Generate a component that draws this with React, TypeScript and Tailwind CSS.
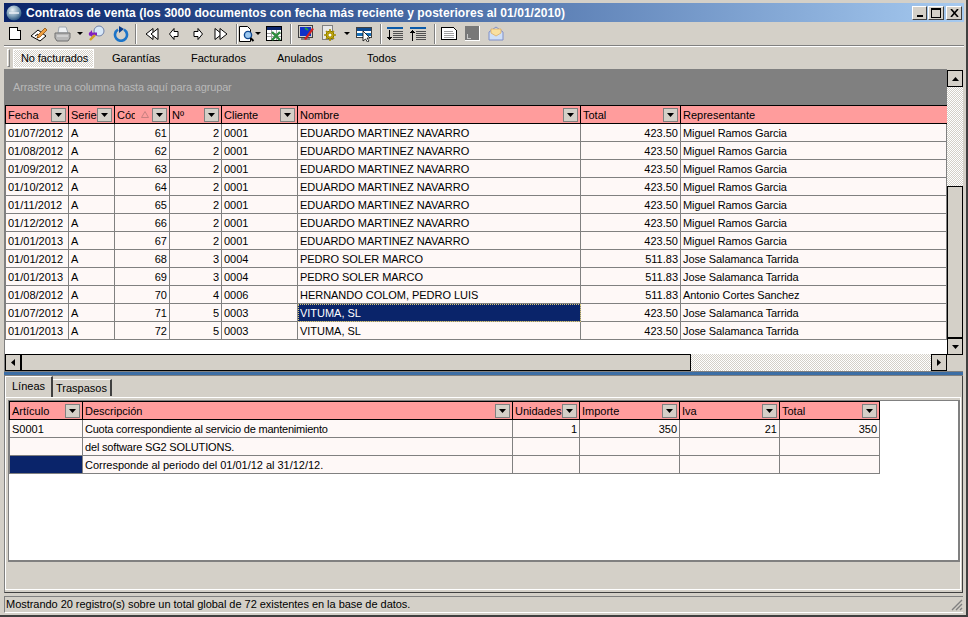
import React from "react";

const upperCols = [63, 46, 55, 52, 76, 283, 100, 266];
const upperHead = ["Fecha", "Serie", "Cód", "Nº", "Cliente", "Nombre", "Total", "Representante"];
const upperRows: string[][] = [
  ["01/07/2012", "A", "61", "2", "0001", "EDUARDO MARTINEZ NAVARRO", "423.50", "Miguel Ramos Garcia"],
  ["01/08/2012", "A", "62", "2", "0001", "EDUARDO MARTINEZ NAVARRO", "423.50", "Miguel Ramos Garcia"],
  ["01/09/2012", "A", "63", "2", "0001", "EDUARDO MARTINEZ NAVARRO", "423.50", "Miguel Ramos Garcia"],
  ["01/10/2012", "A", "64", "2", "0001", "EDUARDO MARTINEZ NAVARRO", "423.50", "Miguel Ramos Garcia"],
  ["01/11/2012", "A", "65", "2", "0001", "EDUARDO MARTINEZ NAVARRO", "423.50", "Miguel Ramos Garcia"],
  ["01/12/2012", "A", "66", "2", "0001", "EDUARDO MARTINEZ NAVARRO", "423.50", "Miguel Ramos Garcia"],
  ["01/01/2013", "A", "67", "2", "0001", "EDUARDO MARTINEZ NAVARRO", "423.50", "Miguel Ramos Garcia"],
  ["01/01/2012", "A", "68", "3", "0004", "PEDRO SOLER MARCO", "511.83", "Jose Salamanca Tarrida"],
  ["01/01/2013", "A", "69", "3", "0004", "PEDRO SOLER MARCO", "511.83", "Jose Salamanca Tarrida"],
  ["01/08/2012", "A", "70", "4", "0006", "HERNANDO COLOM, PEDRO LUIS", "511.83", "Antonio Cortes Sanchez"],
  ["01/07/2012", "A", "71", "5", "0003", "VITUMA, SL", "423.50", "Jose Salamanca Tarrida"],
  ["01/01/2013", "A", "72", "5", "0003", "VITUMA, SL", "423.50", "Jose Salamanca Tarrida"],
];
const upperRight = [false, false, true, true, false, false, true, false];
const upperTrack = ["", "", "", "", "", "tracking-[-0.03px]", "", "tracking-[-0.1px]"];

const lowerCols = [73, 430, 67, 100, 100, 100];
const lowerHead = ["Artículo", "Descripción", "Unidades", "Importe", "Iva", "Total"];
const lowerRows: string[][] = [
  ["S0001", "Cuota correspondiente al servicio de mantenimiento", "1", "350", "21", "350"],
  ["", "del software SG2 SOLUTIONS.", "", "", "", ""],
  ["", "Corresponde al periodo del 01/01/12 al 31/12/12.", "", "", "", ""],
];
const lowerRight = [false, false, true, true, true, true];
const lowerTrack = ["tracking-[-0.22px]", "tracking-[-0.18px]", "tracking-[-0.02px]"];

function HeadBtn() {
  return (
    <span className="mr-[2px] flex h-[14px] w-[15px] shrink-0 items-center justify-center border border-[#808080] bg-[#d4d0c8]">
      <svg width="7" height="4" viewBox="0 0 7 4"><path d="M0 0h7L3.5 4z" fill="#000" /></svg>
    </span>
  );
}

function HeadCell({ w, label, sorted }: { w: number; label: string; sorted?: boolean }) {
  return (
    <div style={{ width: w }} className="flex h-[17px] shrink-0 items-center border-r border-black bg-[#ff9c9c]">
      <span className="min-w-0 flex-1 overflow-hidden whitespace-nowrap pl-[2px] pt-[1px] leading-[14px] text-black">{label}</span>
      {sorted && (
        <svg className="ml-[6px] mr-[3px] shrink-0" width="8" height="7" viewBox="0 0 8 7">
          <path d="M4 .5L7.5 6.5H.5z" fill="none" stroke="#c88080" />
        </svg>
      )}
      <HeadBtn />
    </div>
  );
}

function Cell({ w, text, right, selected, blue, track }: { w: number; text: string; right?: boolean; selected?: boolean; blue?: boolean; track?: string }) {
  return (
    <div style={{ width: w }} className={`flex h-[18px] shrink-0 items-center overflow-hidden whitespace-nowrap border-r border-b border-[#808080] pt-[1px] ${track ?? ""} ${right ? "justify-end pr-[2px]" : "pl-[2px]"} ${selected ? "bg-[#0a246a] text-white outline-1 -outline-offset-1 outline-dotted outline-[#d8c878]" : blue ? "bg-[#0a246a]" : "bg-[#fef8f7] text-black"}`}>
      {text}
    </div>
  );
}

function ScrollBtn({ dir }: { dir: "up" | "down" | "left" | "right" }) {
  const d = { up: "M0 4L3.5 0 7 4z", down: "M0 0h7L3.5 4z", left: "M4 0v7L0 3.5z", right: "M0 0v7L4 3.5z" }[dir];
  const vb = dir === "up" || dir === "down" ? [7, 4] : [4, 7];
  return (
    <div className="flex h-[17px] w-[16px] shrink-0 items-center justify-center border border-black bg-[#d4d0c8]">
      <svg width={vb[0]} height={vb[1]} viewBox={`0 0 ${vb[0]} ${vb[1]}`}><path d={d} fill="#000" /></svg>
    </div>
  );
}

function Sep() {
  return <div className="h-[20px] w-[2px] shrink-0 border-l border-r border-l-[#808080] border-r-white" />;
}

function Drop({ className }: { className: string }) {
  return <svg className={`shrink-0 ${className}`} width="6" height="3" viewBox="0 0 6 3"><path d="M0 0h6L3 3z" fill="#000" /></svg>;
}

function Ico({ w = 16, h = 16, className, children }: { w?: number; h?: number; className: string; children: React.ReactNode }) {
  return <svg className={`shrink-0 ${className}`} width={w} height={h} viewBox={`0 0 ${w} ${h}`} shapeRendering="crispEdges">{children}</svg>;
}

export default function App() {
  return (
    <div className="flex h-[617px] w-[968px] flex-col overflow-hidden border-r-2 border-b-2 border-[#404040] bg-[#d4d0c8] pt-[3px] pl-[4px] pr-[2px] text-[11px] leading-none font-['Liberation_Sans',sans-serif] text-black">
      {/* title bar */}
      <div className="flex h-[19px] shrink-0 items-center bg-gradient-to-r from-[#0a246a] to-[#a6caf0] pr-[2px]">
        <svg className="ml-[2px] mr-[4px] shrink-0" width="16" height="16" viewBox="0 0 16 16">
          <defs>
            <radialGradient id="globe" cx="40%" cy="30%" r="75%">
              <stop offset="0" stopColor="#e8f0f4" />
              <stop offset="0.55" stopColor="#7fa0b8" />
              <stop offset="1" stopColor="#1e4a78" />
            </radialGradient>
          </defs>
          <circle cx="8" cy="8" r="7.5" fill="url(#globe)" />
          <path d="M3 8h10" stroke="#e8eef4" strokeWidth="1.5" />
        </svg>
        <span className="flex-1 whitespace-nowrap text-[12px] font-bold tracking-[0.06px] text-white">Contratos de venta (los 3000 documentos con fecha más reciente y posteriores al 01/01/2010)</span>
        <div className="flex h-[14px] w-[15px] items-end justify-center border border-b-[#404040] border-r-[#404040] border-t-white border-l-white bg-[#d4d0c8] pb-[2px]"><div className="h-[2px] w-[6px] bg-black" /></div>
        <div className="ml-[1px] flex h-[14px] w-[16px] items-center justify-center border border-b-[#404040] border-r-[#404040] border-t-white border-l-white bg-[#d4d0c8]"><div className="h-[10px] w-[10px] border border-t-2 border-black" /></div>
        <div className="ml-[2px] flex h-[14px] w-[16px] items-center justify-center border border-b-[#404040] border-r-[#404040] border-t-white border-l-white bg-[#d4d0c8]">
          <svg width="9" height="8" viewBox="0 0 9 8"><path d="M1 0l7 8M8 0L1 8" stroke="#000" strokeWidth="1.6" /></svg>
        </div>
      </div>

      {/* toolbar */}
      <div className="flex h-[23px] shrink-0 items-center">
        <Ico className="ml-[4px]" w={14} h={15}><path d="M1.5 1.5h8l3 3v9h-11z" fill="#fff" stroke="#000" /><path d="M9.5 1.5v3h3" fill="#d4d0c8" stroke="#000" /></Ico>
        <Ico className="ml-[8px]" w={18} h={16}><g shapeRendering="auto"><path d="M1 10L8 4l8 6-6 5z" fill="#fff" stroke="#000" /><path d="M5 10l3-2M7 12l3-2" stroke="#000" /><path d="M8 9l7-7 2 2-7 7-3 1z" fill="#f0a040" stroke="#804000" strokeWidth=".7" /></g></Ico>
        <Ico className="ml-[6px]" w={17} h={16}><g shapeRendering="auto"><path d="M5 1h7l2 6H4z" fill="#eef0f2" stroke="#a0a8b0" /><path d="M1 7h15v5l-2 3H3l-2-3z" fill="#b8b8b8" stroke="#707070" /><path d="M3 10h11" stroke="#e8e8e8" /></g></Ico>
        <Drop className="ml-[6px]" />
        <Ico className="ml-[5px]" w={17} h={17}><g shapeRendering="auto"><circle cx="11" cy="6" r="5" fill="#d8e8f8" stroke="#7080a8" /><path d="M1 9h8" stroke="#8020c0" strokeWidth="3" /><path d="M4 5L.5 9 4 12z" fill="#8020c0" /><path d="M7 10l-5 5" stroke="#d0a020" strokeWidth="2.4" /></g></Ico>
        <Ico className="ml-[8px]" w={16} h={16}><g shapeRendering="auto"><path d="M5 3.6A6 6 0 1 0 11 3.6" fill="none" stroke="#1c74c8" strokeWidth="2.6" /><path d="M6 0l5 3-5 4z" fill="#0c3e8c" /></g></Ico>
        <div className="ml-[6px]"><Sep /></div>
        <Ico className="ml-[8px]" w={14} h={16}><g shapeRendering="auto"><path d="M8 2.5v11L1 8z" fill="#fff" stroke="#000" /><path d="M13 2.5v11L6 8z" fill="#fff" stroke="#000" /></g></Ico>
        <Ico className="ml-[10px]" w={10} h={16}><g shapeRendering="auto"><path d="M5 2.5v3h4v5H5v3L.5 8z" fill="#fff" stroke="#000" /></g></Ico>
        <Ico className="ml-[14px]" w={10} h={16}><g shapeRendering="auto"><path d="M5 2.5v3H1v5h4v3L9.5 8z" fill="#fff" stroke="#000" /></g></Ico>
        <Ico className="ml-[11px]" w={14} h={16}><g shapeRendering="auto"><path d="M1 2.5v11L8 8z" fill="#fff" stroke="#000" /><path d="M6 2.5v11L13 8z" fill="#fff" stroke="#000" /></g></Ico>
        <div className="ml-[8px]"><Sep /></div>
        <Ico w={17} h={18} className="ml-0"><g shapeRendering="auto"><path d="M1.5 1.5h8l3 3v12h-11z" fill="#fff" stroke="#000" /><circle cx="10" cy="10" r="3.6" fill="#9cc8f0" stroke="#104890" strokeWidth="1.4" /><path d="M12.5 13l3 3" stroke="#000" strokeWidth="2" /></g></Ico>
        <Drop className="ml-0" />
        <Ico className="ml-[5px]" w={17} h={16}><rect x=".5" y=".5" width="15" height="14" fill="#fff" stroke="#000" /><rect x="1" y="1" width="14" height="3" fill="#0a246a" /><path d="M1 7h14M1 10h14M5 4v10M10 4v10" stroke="#a0a0a0" /><g shapeRendering="auto"><path d="M6 6l8 8M14 6l-8 8" stroke="#2c8c3c" strokeWidth="2.4" /></g></Ico>
        <div className="ml-[7px]"><Sep /></div>
        <Ico className="ml-[6px]" w={17} h={17}><rect x=".5" y=".5" width="14" height="12" fill="#d4d0c8" stroke="#404040" /><rect x="2" y="2" width="11" height="9" fill="#1030c8" /><rect x="3" y="13" width="9" height="2" fill="#808080" /><g shapeRendering="auto"><path d="M6 14L14 3l2 1-8 11z" fill="#d02020" /><path d="M7 3l3 2" stroke="#20a040" strokeWidth="2" /></g></Ico>
        <Ico className="ml-[6px]" w={17} h={17}><rect x="1.5" y=".5" width="10" height="14" fill="#e8e8e8" stroke="#808080" /><g shapeRendering="auto"><circle cx="9" cy="10" r="4" fill="#e8d020" stroke="#807000" /><path d="M9 4v12M3 10h12M5 6l8 8M13 6l-8 8" stroke="#a89000" strokeWidth="1.6" /><circle cx="9" cy="10" r="1.5" fill="#fff" /></g></Ico>
        <Drop className="ml-[6px]" />
        <Ico className="ml-[6px]" w={16} h={16}><rect x=".5" y="1.5" width="15" height="10" fill="#fff" stroke="#404040" /><rect x="1" y="2" width="14" height="3" fill="#0c4a90" /><rect x="1" y="7" width="14" height="3" fill="#1870b8" /><g shapeRendering="auto"><path d="M7 5v10l2.5-2 2 3 1.5-1-2-3h3z" fill="#fff" stroke="#000" strokeWidth=".8" /></g></Ico>
        <div className="ml-[8px]"><Sep /></div>
        <Ico className="ml-[5px]" w={16} h={16}><rect x="0" y="1" width="16" height="2" fill="#0a5aa8" /><path d="M6 5h10M6 7h10M6 9h10M6 11h10M6 13h10" stroke="#505050" /><path d="M2.5 4v9" stroke="#000" strokeWidth="1" /><path d="M0 11h5l-2.5 3z" fill="#000" /></Ico>
        <Ico className="ml-[7px]" w={16} h={16}><rect x="0" y="1" width="16" height="2" fill="#0a5aa8" /><path d="M6 5h10M6 7h10M6 9h10M6 11h10M6 13h10" stroke="#505050" /><path d="M2.5 6v9" stroke="#000" strokeWidth="1" /><path d="M0 7h5L2.5 4z" fill="#000" /></Ico>
        <div className="ml-[8px]"><Sep /></div>
        <Ico className="ml-[5px]" w={16} h={15}><path d="M.5 1.5h12l3 3v9H.5z" fill="#fff" stroke="#000" /><path d="M3 5h9M3 7h10M3 9h10M3 11h10" stroke="#a0a0a0" /></Ico>
        <Ico className="ml-[8px]" w={15} h={15}><rect x="0" y="0" width="15" height="15" fill="#fff" /><rect x="0" y="0" width="14" height="14" fill="#787878" /><path d="M2 8v4h4" stroke="#c8c8c8" fill="none" /></Ico>
        <Ico className="ml-[8px]" w={16} h={16}><g shapeRendering="auto"><path d="M1 6l7-5 7 5v8H1z" fill="#cfe0f8" stroke="#8090c8" /><path d="M3 7V3h10v4L8 10z" fill="#f8e0a0" stroke="#d8a860" strokeWidth=".7" /></g></Ico>
      </div>
      <div className="h-[2px] shrink-0 border-t border-b border-t-[#808080] border-b-white" />

      {/* status tabs */}
      <div className="flex h-[22px] shrink-0 items-center">
        <div className="ml-[3px] h-[18px] w-[3px] border border-t-white border-l-white border-r-[#808080] border-b-[#808080]" />
        <div className="ml-[3px] flex h-[19px] w-[81px] items-center border border-white bg-[repeating-conic-gradient(#d4d0c8_0_25%,#ffffff_0_50%)] bg-[length:2px_2px] pl-[7px] tracking-[-0.1px]">No facturados</div>
        <span className="ml-[18px] w-[79px]">Garantías</span>
        <span className="w-[86px]">Facturados</span>
        <span className="w-[90px]">Anulados</span>
        <span>Todos</span>
      </div>

      {/* upper grid */}
      <div className="flex h-[302px] shrink-0 flex-col">
        <div className="flex h-[285px] shrink-0">
          <div className="flex w-[943px] shrink-0 flex-col border-l border-[#808080] bg-white">
            <div className="flex h-[36px] shrink-0 items-center bg-[#808080] pl-[8px] pt-[1px] tracking-[-0.16px] text-[#b8b8b8]">Arrastre una columna hasta aquí para agrupar</div>
            <div className="flex w-fit shrink-0 border-y border-l border-black">
              {upperHead.map((h, i) => i === 7 ? (
                <div key={h} style={{ width: upperCols[i] }} className="flex h-[17px] items-center bg-[#ff9c9c] pl-[2px] pt-[1px]">{h}</div>
              ) : (
                <HeadCell key={h} w={upperCols[i]} label={h} sorted={i === 2} />
              ))}
            </div>
            {upperRows.map((r, ri) => (
              <div key={ri} className="flex shrink-0 border-l border-[#808080]">
                {r.map((c, ci) => (
                  <Cell key={ci} w={upperCols[ci]} text={c} right={upperRight[ci]} selected={ri === 10 && ci === 5} track={upperTrack[ci]} />
                ))}
              </div>
            ))}
          </div>
          <div className="flex w-[16px] shrink-0 flex-col pt-[1px]">
            <ScrollBtn dir="up" />
            <div className="h-[99px] shrink-0 bg-[repeating-conic-gradient(#d4d0c8_0_25%,#ffffff_0_50%)] bg-[length:2px_2px]" />
            <div className="h-[152px] shrink-0 border border-black bg-[#d4d0c8]" />
            <ScrollBtn dir="down" />
          </div>
        </div>
        <div className="flex h-[17px] w-[943px] shrink-0 border-l border-[#808080]">
          <ScrollBtn dir="left" />
          <div className="h-[17px] w-[670px] shrink-0 border border-black bg-[#d4d0c8]" />
          <div className="h-[17px] w-[240px] shrink-0 bg-[repeating-conic-gradient(#d4d0c8_0_25%,#ffffff_0_50%)] bg-[length:2px_2px]" />
          <ScrollBtn dir="right" />
        </div>
      </div>

      {/* splitter */}
      <div className="mr-[1px] h-[1px] shrink-0 bg-[#808080]" />
      <div className="mr-[1px] h-[3px] shrink-0 bg-[#3c6ea5]" />
      <div className="mr-[1px] h-[1px] shrink-0 bg-[#808080]" />

      {/* lower area */}
      <div className="mr-[1px] flex h-[217px] shrink-0 flex-col border-l border-r border-b border-l-[#808080] border-r-[#404040] border-b-[#404040] pb-[2px] pr-[1px]">
        <div className="flex h-[21px] shrink-0 items-end">
          <div className="flex h-[21px] w-[48px] items-center justify-center border-t border-l border-r-2 border-t-white border-l-white border-r-[#404040] pb-[2px]">Líneas</div>
          <div className="mb-[1px] flex h-[17px] w-[59px] items-center justify-center border-t border-r-2 border-t-white border-r-[#404040]">Traspasos</div>
        </div>
        <div className="flex h-[193px] shrink-0 flex-col border-t border-l border-b border-r border-white pl-[2px] pt-[2px]">
          <div className="flex h-[162px] shrink-0 flex-col border-t border-l border-r-2 border-b-2 border-[#808080] bg-white">
            <div className="flex w-fit shrink-0 border-y border-l border-black">
              {lowerHead.map((h, i) => <HeadCell key={h} w={lowerCols[i]} label={h} />)}
            </div>
            {lowerRows.map((r, ri) => (
              <div key={ri} className="flex shrink-0 border-l border-[#808080]">
                {r.map((c, ci) => (
                  <Cell key={ci} w={lowerCols[ci]} text={c} right={lowerRight[ci]} blue={ri === 2 && ci === 0} track={ci === 1 ? lowerTrack[ri] : ""} />
                ))}
              </div>
            ))}
          </div>
        </div>
      </div>

      {/* status bar */}
      <div className="mt-[3px] mr-[1px] flex h-[17px] shrink-0 items-center border-t border-l border-b border-t-[#808080] border-l-[#808080] border-b-white pl-[1px] tracking-[-0.035px]">
        <span className="flex-1">Mostrando 20 registro(s) sobre un total global de 72 existentes en la base de datos.</span>
        <svg width="12" height="12" viewBox="0 0 12 12"><path d="M11 1L1 11M11 5l-6 6M11 9l-2 2" stroke="#808080" strokeWidth="1.4" /></svg>
      </div>
    </div>
  );
}
